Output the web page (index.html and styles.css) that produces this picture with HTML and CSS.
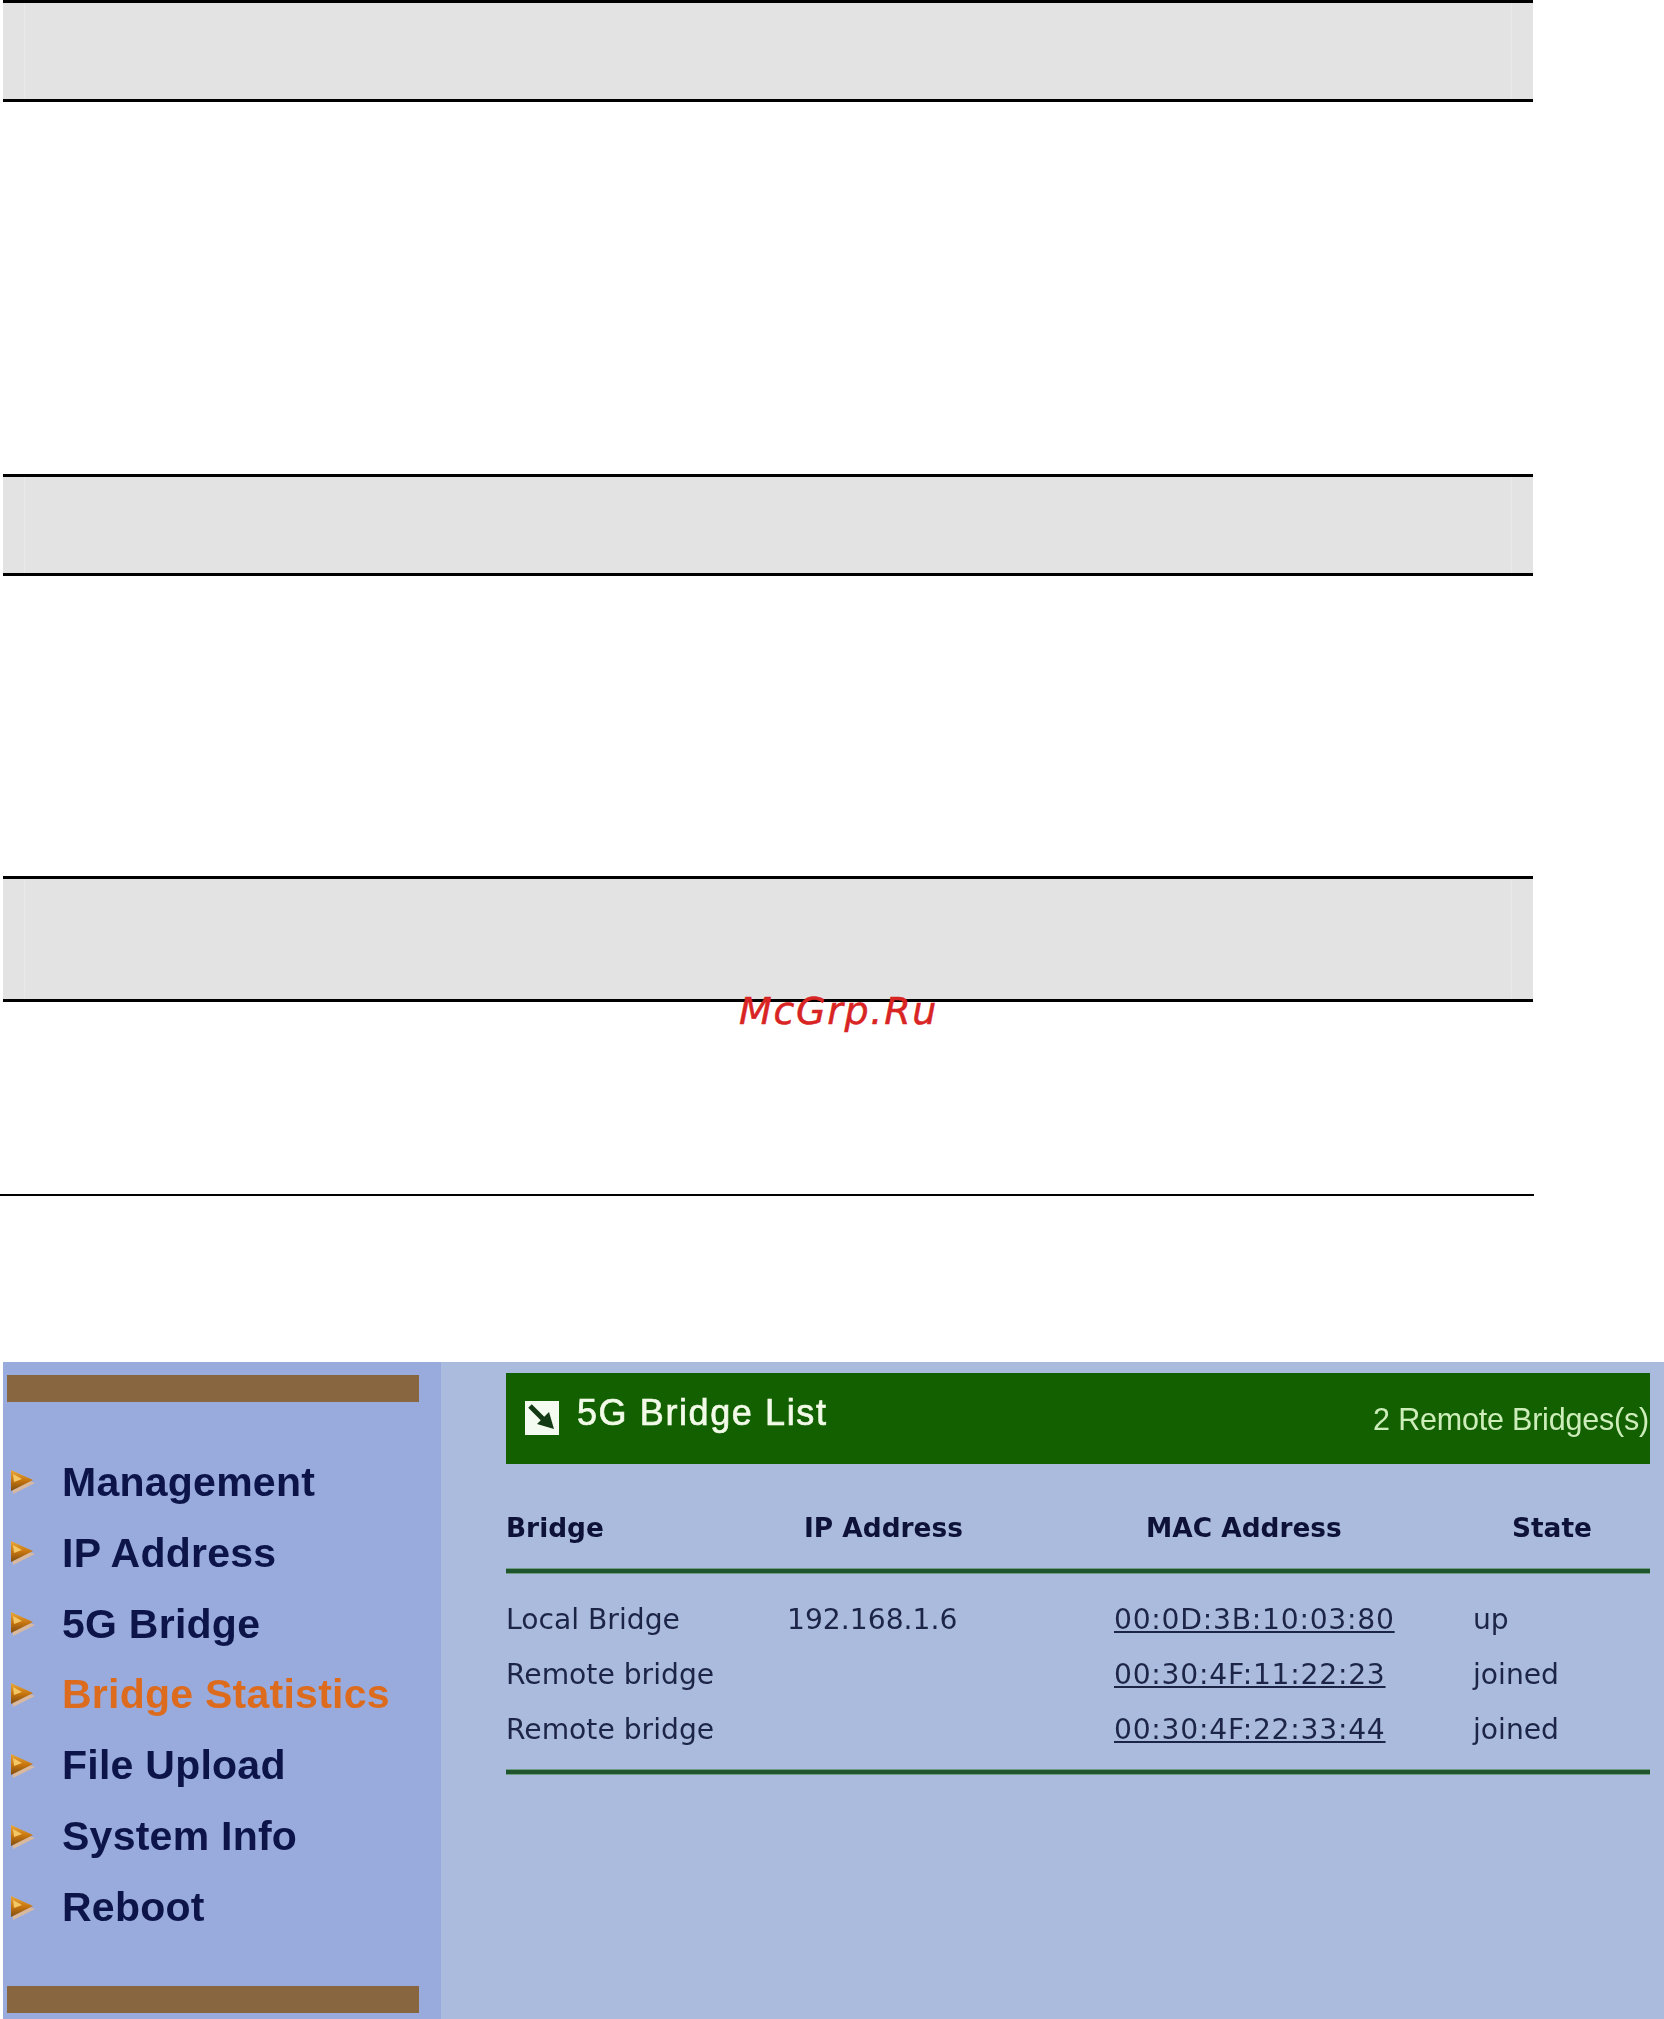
FILE: index.html
```html
<!DOCTYPE html>
<html lang="en">
<head>
<meta charset="utf-8">
<title>5G Bridge List</title>
<link rel="stylesheet" href="styles.css">
</head>
<body>
<svg class="defs" width="0" height="0" aria-hidden="true">
  <defs>
    <linearGradient id="tri" x1="0" y1="0" x2="0" y2="1">
      <stop offset="0" stop-color="#eaa93c"/>
      <stop offset="0.5" stop-color="#c8760f"/>
      <stop offset="1" stop-color="#7d4d12"/>
    </linearGradient>
    <symbol id="bullet" viewBox="0 0 24 24">
      <path d="M1 5 L24 13 L2 24 Z" fill="#d8b9a0"/>
      <path d="M0 0 L22 10 L0 21 Z" fill="url(#tri)"/>
      <path d="M2 4 L11 9 L3 12 Z" fill="#f3c766"/>
    </symbol>
  </defs>
</svg>
<main class="page">
  <div class="band band-a"><i></i><i></i><i></i></div>
  <div class="band band-b"><i></i><i></i><i></i></div>
  <div class="band band-c"><i></i><i></i><i></i></div>
  <div class="closing-rule"></div>
  <section class="shot">
    <aside class="side">
      <div class="brown"></div>
      <ul class="nav">
        <li><svg class="bullet"><use href="#bullet"/></svg>Management</li>
        <li><svg class="bullet"><use href="#bullet"/></svg>IP Address</li>
        <li><svg class="bullet"><use href="#bullet"/></svg>5G Bridge</li>
        <li class="active"><svg class="bullet"><use href="#bullet"/></svg>Bridge Statistics</li>
        <li><svg class="bullet"><use href="#bullet"/></svg>File Upload</li>
        <li><svg class="bullet"><use href="#bullet"/></svg>System Info</li>
        <li><svg class="bullet"><use href="#bullet"/></svg>Reboot</li>
      </ul>
      <div class="brown"></div>
    </aside>
    <div class="content">
      <header class="head">
        <svg class="head-icon" viewBox="0 0 34 34">
          <rect width="34" height="34" fill="#f4fbf0"/>
          <path d="M5 5 L20 20" stroke="#123a14" stroke-width="5" fill="none"/>
          <path d="M29 28 L12 23 L24 11 Z" fill="#123a14"/>
        </svg>
        <h1 class="title">5G Bridge List</h1>
        <span class="count">2 Remote Bridges(s)</span>
      </header>
      <div class="cols cols-head">
        <span>Bridge</span>
        <span class="h-ip">IP Address</span>
        <span class="h-mac">MAC Address</span>
        <span class="h-state">State</span>
      </div>
      <div class="rule"></div>
      <div class="rows">
        <div class="cols"><span>Local Bridge</span><span>192.168.1.6</span><a class="mac" href="#">00:0D:3B:10:03:80</a><span>up</span></div>
        <div class="cols"><span>Remote bridge</span><span></span><a class="mac" href="#">00:30:4F:11:22:23</a><span>joined</span></div>
        <div class="cols"><span>Remote bridge</span><span></span><a class="mac" href="#">00:30:4F:22:33:44</a><span>joined</span></div>
      </div>
      <div class="rule"></div>
    </div>
  </section>
  <div class="mark">McGrp.Ru</div>
</main>
</body>
</html>
```

FILE: styles.css
```css
html, body { margin: 0; padding: 0; background: #fff; }
.defs { position: absolute; }
.page { position: relative; width: 1664px; height: 2019px; overflow: hidden; font-family: "Liberation Sans", Arial, sans-serif; }

.band { display: grid; grid-template-columns: 21px 1fr 21px; gap: 1px; width: 1530px; margin-left: 3px; background: #e9e9e9; border-top: 3px solid #000; border-bottom: 3px solid #000; box-sizing: border-box; }
.band i { background: #e3e3e3; }
.band-a { height: 102px; margin-bottom: 372px; }
.band-b { height: 102px; margin-bottom: 300px; }
.band-c { height: 126px; margin-bottom: 192px; }
.closing-rule { width: 1534px; height: 2px; background: #000; margin-bottom: 166px; }

.shot { display: flex; height: 657px; margin-left: 3px; filter: blur(0.45px); }
.side { width: 438px; background: #99abdc; padding: 13px 22px 6px 4px; box-sizing: border-box; display: flex; flex-direction: column; }
.brown { height: 27px; background: #88663f; }
.nav { list-style: none; margin: 45px 0 43px; padding: 0; flex: 1; display: flex; flex-direction: column; }
.nav li { height: 70.9px; display: flex; align-items: center; gap: 27px; padding-left: 4px; font-weight: 700; font-size: 41px; letter-spacing: 0.25px; color: #0d1548; white-space: nowrap; }
.nav li.active { color: #dd6b1e; }
.bullet { width: 24px; height: 24px; flex: none; }

.content { flex: 1; background: #aabbdd; padding: 11px 14px 0 65px; }
.head { height: 91px; background: #136000; display: flex; align-items: center; padding: 0 1px 0 19px; box-sizing: border-box; }
.head-icon { width: 34px; height: 34px; flex: none; margin-top: -2px; }
.title { margin: 0 0 0 18px; font-size: 36px; line-height: 1; font-weight: 400; letter-spacing: 1.6px; color: #f2fbe8; -webkit-text-stroke: 0.7px #f2fbe8; transform: translateY(-6px); }
.count { margin-left: auto; font-size: 30.5px; line-height: 1; letter-spacing: -0.2px; color: #cdeebb; transform: translateY(1px); }

.cols { display: grid; grid-template-columns: 281px 327px 359px 177px; align-items: baseline; font-family: "DejaVu Sans", sans-serif; font-size: 28.2px; line-height: 55px; color: #1d2547; height: 55px; white-space: nowrap; }
.cols-head { font-weight: 700; font-size: 26.4px; color: #0e1238; margin-top: 36px; margin-bottom: 13px; }
.h-ip { padding-left: 17px; }
.h-mac { padding-left: 32px; }
.h-state { padding-left: 39px; }
.rule { height: 4px; background: #1e552c; border-top: 1px solid #6f9c84; border-bottom: 1px solid #6f9c84; }
.rows { padding: 18px 0 12px; }
.mac { color: #1d2547; letter-spacing: 0.75px; text-decoration: underline; justify-self: start; }

.mark { position: absolute; left: 739px; top: 986px; font-family: "DejaVu Sans", sans-serif; font-style: italic; font-size: 38px; line-height: 50px; letter-spacing: 1.7px; color: #d92424; -webkit-text-stroke: 0.5px #d92424; }
```
